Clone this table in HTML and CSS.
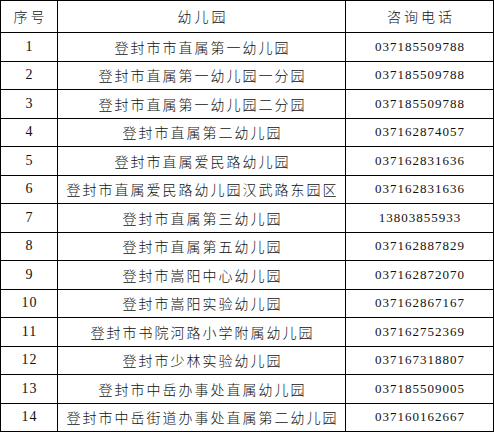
FILE: index.html
```html
<!DOCTYPE html>
<html lang="zh">
<head>
<meta charset="utf-8">
<title>幼儿园咨询电话</title>
<link rel="stylesheet" href="styles.css">
</head>
<body>
<table class="list">
  <colgroup>
    <col class="c-no">
    <col class="c-name">
    <col class="c-tel">
  </colgroup>
  <thead>
    <tr><th>序号</th><th>幼儿园</th><th>咨询电话</th></tr>
  </thead>
  <tbody>
    <tr><td class="no">1</td><td class="name">登封市市直属第一幼儿园</td><td class="tel">037185509788</td></tr>
    <tr><td class="no">2</td><td class="name">登封市直属第一幼儿园一分园</td><td class="tel">037185509788</td></tr>
    <tr><td class="no">3</td><td class="name">登封市直属第一幼儿园二分园</td><td class="tel">037185509788</td></tr>
    <tr><td class="no">4</td><td class="name">登封市直属第二幼儿园</td><td class="tel">037162874057</td></tr>
    <tr><td class="no">5</td><td class="name">登封市直属爱民路幼儿园</td><td class="tel">037162831636</td></tr>
    <tr><td class="no">6</td><td class="name">登封市直属爱民路幼儿园汉武路东园区</td><td class="tel">037162831636</td></tr>
    <tr><td class="no">7</td><td class="name">登封市直属第三幼儿园</td><td class="tel">13803855933</td></tr>
    <tr><td class="no">8</td><td class="name">登封市直属第五幼儿园</td><td class="tel">037162887829</td></tr>
    <tr><td class="no">9</td><td class="name">登封市嵩阳中心幼儿园</td><td class="tel">037162872070</td></tr>
    <tr><td class="no">10</td><td class="name">登封市嵩阳实验幼儿园</td><td class="tel">037162867167</td></tr>
    <tr><td class="no">11</td><td class="name">登封市书院河路小学附属幼儿园</td><td class="tel">037162752369</td></tr>
    <tr><td class="no">12</td><td class="name">登封市少林实验幼儿园</td><td class="tel">037167318807</td></tr>
    <tr><td class="no">13</td><td class="name">登封市中岳办事处直属幼儿园</td><td class="tel">037185509005</td></tr>
    <tr><td class="no">14</td><td class="name">登封市中岳街道办事处直属第二幼儿园</td><td class="tel">037160162667</td></tr>
  </tbody>
</table>
</body>
</html>
```
FILE: styles.css
```css
html, body {
  margin: 0;
  padding: 0;
  background: #ffffff;
}

.list {
  border-collapse: collapse;
  table-layout: fixed;
  width: 493px;
  color: #111111;
  font-family: "Liberation Serif", "Noto Sans CJK SC", serif;
}

.c-no { width: 57px; }
.c-name { width: 288px; }
.c-tel { width: 148px; }

.list th,
.list td {
  border: 1px solid #000000;
  padding: 0 0 1px 0;
  text-align: center;
  vertical-align: middle;
  white-space: nowrap;
  overflow: hidden;
}

.list thead tr { height: 32px; }
.list tbody tr:nth-child(odd) { height: 29px; }
.list tbody tr:nth-child(even) { height: 28px; }

.list th {
  font-family: "Noto Sans CJK SC", sans-serif;
  font-weight: 300;
  font-size: 14px;
  letter-spacing: 3px;
  padding-left: 3px;
}

.list .no {
  font-size: 14px;
  letter-spacing: 1px;
  padding-left: 1px;
}

.list .name {
  font-family: "Noto Sans CJK SC", sans-serif;
  font-weight: 300;
  font-size: 14px;
  letter-spacing: 2px;
  padding-left: 2px;
}

.list .tel {
  font-size: 13px;
  letter-spacing: 1px;
  padding-left: 1px;
}
```
